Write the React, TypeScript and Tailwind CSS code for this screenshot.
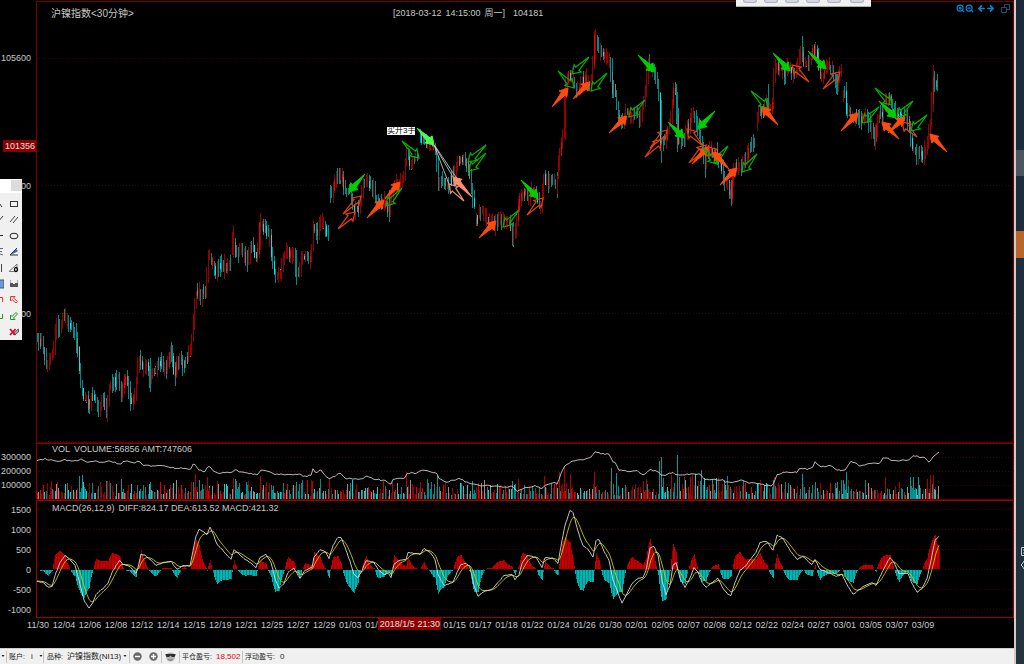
import { useState } from 'react';
import type { ReactNode } from 'react';
import { ArrowLeft, ArrowRight, ZoomIn, ZoomOut } from 'lucide-react';

type Point = [number, number];
type ArrowKind = 'buy' | 'buyOpen' | 'sell' | 'sellOpen' | 'sellHot' | 'buyHot' | 'buyHotOpen';
type Arrow = [ArrowKind, number, number, number, number];

// Each segment is one unbroken run of candles, split where the price gaps.
const priceSegments: Point[][] = [
  [[37, 335], [39, 345], [42, 340], [44, 352], [46, 360], [48, 366], [50, 358], [52, 358], [54, 350], [56, 330], [57, 320], [59, 330], [62, 325], [63, 318], [65, 316], [67, 322], [69, 325], [72, 325], [75, 332], [76, 330], [77, 345], [79, 355], [80, 372], [82, 390], [84, 396], [87, 398], [89, 408], [91, 400], [94, 395], [97, 402], [99, 410], [101, 406], [104, 400], [106, 410], [107, 416], [109, 390], [112, 382], [114, 385], [118, 375], [120, 380], [121, 400], [124, 382], [127, 378], [129, 388], [131, 402], [134, 400], [136, 390], [138, 365], [140, 358], [142, 365], [144, 372], [148, 362], [150, 382], [151, 376], [154, 372], [157, 368], [160, 362], [164, 365], [167, 372], [170, 355], [171, 347], [173, 360], [175, 378], [177, 365], [180, 358], [184, 366], [187, 360], [190, 352], [193, 335], [194, 315], [196, 295], [199, 290], [201, 302], [203, 290], [206, 290], [208, 265], [209, 255], [213, 262], [216, 273], [219, 268], [222, 262], [225, 268], [229, 265], [231, 262]],
  [[232, 250], [233, 232], [235, 255], [238, 250], [241, 247], [244, 252], [246, 258], [248, 262], [251, 245], [253, 245], [256, 258], [259, 248], [260, 220], [262, 227], [265, 228], [268, 235], [270, 235], [272, 258], [275, 273], [278, 276], [281, 272], [284, 260], [286, 252], [288, 250], [290, 255], [294, 252], [296, 270], [298, 276], [300, 270], [302, 258], [305, 258], [308, 254], [310, 265], [313, 240], [314, 222], [316, 230], [318, 235], [320, 222], [323, 222], [326, 230], [328, 234]],
  [[330, 190], [331, 197], [333, 193], [335, 182], [337, 176], [340, 174], [343, 180], [345, 190], [348, 192], [350, 190], [352, 200], [354, 212], [357, 208], [360, 210], [362, 190], [364, 180], [367, 182], [371, 185], [374, 187], [376, 200], [379, 205], [383, 200], [386, 205], [389, 214], [390, 200], [393, 192], [396, 184], [400, 182], [404, 180], [406, 160], [407, 152], [409, 158], [411, 168], [413, 162], [416, 157], [419, 156]],
  [[420, 132], [422, 140], [425, 140], [429, 148], [432, 142], [435, 148], [437, 158], [438, 175], [439, 188], [443, 180], [446, 182], [449, 188], [452, 180], [455, 175], [457, 165], [459, 160], [463, 158], [466, 162], [469, 170], [471, 178], [472, 192], [474, 204]],
  [[476, 222], [479, 215], [482, 210], [485, 215], [488, 222], [492, 222], [496, 225], [500, 220], [503, 222], [505, 218], [508, 222], [511, 225], [513, 242], [515, 230], [518, 213], [520, 200], [523, 195], [526, 192], [529, 200], [532, 190], [535, 190], [538, 200], [540, 206], [541, 210], [543, 190], [545, 176], [548, 182], [551, 182], [554, 180], [557, 187]],
  [[558, 170], [559, 158], [561, 148], [563, 138], [564, 115], [565, 92], [566, 88], [568, 80], [570, 73], [573, 78], [576, 88], [580, 92], [583, 82], [586, 78], [589, 85], [592, 82], [594, 50], [595, 34], [597, 42], [599, 50], [602, 55], [605, 55], [607, 60], [609, 54], [611, 70], [612, 92], [615, 87], [617, 105], [619, 120], [621, 125], [624, 120], [626, 112], [628, 112], [631, 116], [634, 115], [637, 112], [640, 122], [643, 105], [646, 90], [648, 68], [649, 60], [651, 70], [653, 68], [656, 78], [659, 90], [660, 120], [661, 152], [663, 140], [666, 143], [668, 130], [671, 118], [673, 100], [674, 90], [676, 92], [677, 110], [678, 140], [681, 142], [684, 142], [687, 130], [690, 125], [692, 110], [694, 114], [697, 125], [700, 135], [703, 150], [705, 165], [707, 150], [710, 148], [713, 155], [716, 150], [719, 160], [722, 165], [724, 180], [726, 188], [728, 182], [731, 200], [732, 185], [734, 168], [737, 165], [740, 168], [743, 162], [746, 160], [749, 150], [752, 144], [755, 142]],
  [[757, 125], [758, 112], [761, 110], [764, 115], [767, 100], [768, 105], [770, 110], [773, 105], [774, 75], [776, 65], [779, 68], [782, 67], [785, 75], [788, 64], [791, 70], [795, 76], [797, 68], [799, 62], [802, 46], [803, 58], [806, 65], [810, 62], [813, 52], [815, 48], [818, 56], [820, 73], [822, 80], [825, 72], [828, 64], [831, 70], [834, 75], [837, 85], [840, 75], [841, 68]],
  [[843, 95], [846, 93], [847, 115], [849, 107], [852, 118], [855, 118], [857, 112], [860, 120], [863, 118], [866, 114], [869, 125], [873, 128], [875, 140], [878, 120], [881, 114], [883, 115], [885, 102], [888, 100], [891, 100], [894, 110], [897, 118], [900, 115], [903, 120], [905, 115], [907, 117], [910, 130], [912, 145], [915, 150], [918, 158], [921, 152], [924, 158], [927, 146], [930, 130], [932, 110], [933, 75], [935, 85], [938, 82]],
];

// Candles whose shadows stand out from the run: x, high, low, rising
const longCandles: [number, number, number, boolean][] = [
  [107, 395, 422, true], [150, 358, 392, false], [175, 362, 386, false], [171, 342, 362, false], [233, 225, 258, true], [247, 250, 272, false], [260, 213, 250, true],
  [296, 250, 285, false], [389, 190, 222, false], [513, 222, 247, false], [557, 172, 198, false], [595, 29, 60, true], [661, 100, 163, false],
  [705, 150, 178, false], [731, 180, 206, false], [768, 84, 112, false], [802, 36, 62, false], [815, 43, 60, true], [875, 125, 150, true], [924, 140, 165, true],
  [933, 65, 112, true], [565, 78, 140, true], [340, 168, 180, true], [677, 92, 152, false], [612, 58, 98, false], [785, 66, 84, false], [837, 74, 95, false],
];

const openInterest: Point[] = [
  [37, 461], [45, 459], [55, 461], [65, 460], [75, 461], [80, 459], [88, 462], [97, 461], [102, 463], [110, 461], [120, 464], [125, 461], [135, 463], [139, 461], [143, 465], [155, 466], [165, 466], [175, 468], [185, 468], [190, 470], [194, 463], [198, 469], [205, 472], [208, 465], [213, 470], [218, 474], [225, 472], [232, 473], [234, 469], [240, 472], [250, 473], [258, 475], [260, 470], [267, 471], [275, 475], [280, 474], [290, 475], [300, 474], [303, 477], [311, 475], [313, 469], [316, 474], [320, 469], [324, 474], [328, 479], [335, 476], [340, 473], [345, 478], [360, 480], [366, 476], [375, 479], [385, 481], [391, 484], [393, 479], [405, 478], [406, 473], [415, 473], [423, 470], [430, 472], [437, 473], [439, 478], [446, 482], [455, 480], [459, 478], [466, 482], [475, 485], [490, 486], [505, 487], [512, 486], [517, 491], [525, 488], [535, 486], [542, 489], [545, 485], [555, 483], [558, 484], [560, 476], [564, 467], [570, 462], [580, 460], [592, 457], [594, 452], [598, 452], [600, 454], [610, 454], [612, 461], [616, 463], [619, 470], [630, 472], [636, 470], [643, 475], [650, 470], [657, 471], [662, 476], [670, 473], [673, 472], [676, 475], [690, 474], [700, 474], [705, 479], [715, 480], [723, 480], [725, 482], [733, 482], [740, 480], [748, 483], [755, 483], [765, 485], [770, 486], [774, 484], [776, 475], [785, 472], [797, 472], [800, 468], [808, 469], [813, 467], [815, 462], [820, 467], [830, 466], [838, 470], [845, 470], [851, 461], [860, 466], [870, 463], [880, 463], [884, 457], [893, 461], [910, 460], [912, 455], [925, 458], [929, 462], [935, 455], [939, 452],
];

const diffLine: Point[] = [
  [37, 581], [43, 582], [48, 587], [52, 586], [55, 575], [60, 562], [65, 555], [70, 559], [75, 565], [79, 580], [84, 600], [89, 608], [93, 602], [96, 594], [103, 588], [108, 583], [112, 572], [118, 562], [120, 560], [123, 564], [130, 566], [136, 573], [138, 567], [141, 554], [145, 555], [151, 560], [156, 565], [164, 562], [171, 561], [177, 569], [184, 565], [190, 566], [193, 550], [196, 536], [199, 529], [203, 531], [207, 534], [210, 527], [213, 533], [217, 544], [222, 549], [228, 556], [231, 559], [234, 549], [238, 553], [245, 559], [250, 562], [256, 567], [260, 557], [266, 554], [271, 562], [275, 578], [279, 588], [284, 583], [288, 572], [294, 568], [300, 578], [305, 570], [312, 567], [314, 557], [320, 549], [326, 552], [329, 558], [333, 545], [338, 537], [341, 537], [345, 547], [350, 561], [354, 574], [358, 577], [362, 570], [366, 560], [374, 562], [378, 569], [384, 574], [388, 573], [391, 577], [394, 564], [399, 560], [406, 559], [408, 552], [420, 554], [424, 548], [430, 552], [435, 559], [438, 574], [444, 585], [453, 582], [457, 572], [461, 564], [466, 563], [470, 567], [474, 585], [478, 596], [484, 591], [492, 589], [498, 582], [504, 575], [512, 574], [515, 579], [519, 574], [522, 563], [527, 555], [536, 557], [542, 567], [545, 557], [553, 558], [558, 563], [562, 540], [565, 525], [570, 510], [573, 512], [577, 527], [580, 537], [583, 545], [588, 549], [593, 557], [596, 540], [599, 539], [604, 551], [609, 560], [613, 580], [619, 595], [622, 603], [626, 595], [632, 583], [638, 578], [643, 577], [646, 570], [650, 548], [654, 546], [658, 555], [662, 580], [666, 594], [670, 585], [673, 565], [676, 562], [680, 578], [685, 587], [690, 578], [694, 567], [698, 572], [702, 582], [706, 587], [711, 583], [718, 578], [723, 588], [728, 594], [731, 595], [735, 582], [740, 570], [746, 565], [752, 557], [756, 552], [760, 542], [767, 541], [773, 550], [777, 535], [782, 537], [790, 550], [797, 559], [803, 556], [808, 561], [812, 564], [815, 559], [820, 569], [828, 572], [836, 576], [842, 574], [847, 584], [853, 594], [858, 590], [865, 585], [872, 582], [876, 585], [883, 570], [890, 557], [894, 562], [899, 573], [908, 573], [912, 583], [917, 592], [922, 588], [927, 578], [931, 560], [935, 540], [939, 536],
];

const volumeSpikes: Point[] = [
  [51, 18], [57, 17], [79, 23], [82, 24], [107, 18], [121, 20], [150, 17], [170, 14], [195, 25], [199, 19], [207, 22], [233, 21], [235, 20], [246, 17], [260, 23], [273, 13], [296, 17], [312, 18], [329, 20], [392, 17], [406, 27], [420, 17], [437, 24], [472, 18], [512, 18], [518, 20], [544, 23], [559, 27], [564, 33], [570, 25], [594, 27], [611, 31], [616, 26], [643, 18], [646, 20], [659, 38], [661, 42], [671, 24], [677, 44], [684, 22], [690, 22], [701, 29], [712, 19], [724, 19], [774, 22], [802, 25], [815, 17], [837, 17], [843, 19], [846, 27], [885, 22], [899, 17], [910, 22], [913, 22], [918, 22], [927, 20], [930, 24], [933, 24],
];

// kind, tip x, tip y, tail x, tail y
const arrows: Arrow[] = [
  ['buyOpen', 361, 196, 343, 214], ['buyOpen', 355, 212, 338, 229], ['sell', 349, 192, 365, 174],
  ['buy', 384, 200, 367, 218], ['buy', 400, 182, 385, 199], ['sellOpen', 386, 206, 402, 188],
  ['sellOpen', 419, 158, 402, 141], ['sellHot', 434, 145, 417, 128], ['sellOpen', 468, 162, 486, 145],
  ['sellOpen', 469, 171, 486, 153], ['buyHot', 453, 177, 472, 197], ['buyHotOpen', 449, 184, 464, 201],
  ['buy', 496, 221, 479, 238], ['sellOpen', 503, 227, 519, 210], ['sell', 538, 198, 521, 180],
  ['buyOpen', 543, 198, 527, 215], ['buy', 568, 88, 552, 107], ['sellOpen', 574, 88, 558, 71],
  ['sellOpen', 572, 74, 589, 57], ['buy', 590, 82, 573, 99], ['sellOpen', 591, 91, 607, 73],
  ['sell', 655, 72, 638, 55], ['sellOpen', 629, 117, 645, 100], ['buy', 627, 116, 609, 133],
  ['buyOpen', 667, 130, 650, 148], ['buyOpen', 662, 139, 645, 157], ['sell', 684, 138, 668, 122],
  ['buyOpen', 687, 129, 703, 146], ['sell', 698, 129, 715, 111], ['buyOpen', 706, 145, 689, 163],
  ['buy', 708, 147, 692, 164], ['buyOpen', 708, 147, 727, 167], ['sellOpen', 717, 164, 703, 148],
  ['sellOpen', 714, 163, 728, 146], ['buy', 713, 152, 729, 169], ['buy', 737, 168, 720, 185],
  ['sellOpen', 742, 172, 757, 154], ['sellOpen', 768, 108, 751, 91], ['buy', 762, 107, 778, 125],
  ['sell', 790, 71, 773, 53], ['buyOpen', 792, 65, 809, 82], ['sell', 826, 69, 808, 51],
  ['buyOpen', 840, 72, 823, 89], ['buy', 858, 113, 841, 131], ['sellOpen', 862, 123, 879, 107],
  ['sellOpen', 892, 105, 875, 88], ['sell', 896, 118, 879, 101], ['sellOpen', 897, 117, 913, 101],
  ['buy', 882, 122, 899, 139], ['buy', 905, 117, 888, 133], ['buyOpen', 902, 122, 917, 137],
  ['sellOpen', 911, 131, 927, 115], ['buy', 930, 134, 947, 152],
];

const arrowStyle: Record<ArrowKind, { fill: string; stroke: string }> = {
  buy: { fill: '#ff4a10', stroke: '#ff4a10' },
  buyOpen: { fill: 'none', stroke: '#e0430f' },
  sell: { fill: '#00d000', stroke: '#00d000' },
  sellOpen: { fill: 'none', stroke: '#00b400' },
  sellHot: { fill: '#4dff4d', stroke: '#4dff4d' },
  buyHot: { fill: '#ff8e70', stroke: '#ff8e70' },
  buyHotOpen: { fill: 'none', stroke: '#e8957c' },
};

// The cursor tag covers the labels after 01/03, so only the start of one is drawn there.
const datesBeforeCursor = ['11/30', '12/04', '12/06', '12/08', '12/12', '12/14', '12/15', '12/19', '12/21', '12/25', '12/27', '12/29', '01/03'];
const datesAfterCursor = [
  '01/15', '01/17', '01/18', '01/22', '01/24', '01/26', '01/30', '02/01', '02/05', '02/07',
  '02/08', '02/12', '02/22', '02/24', '02/27', '03/01', '03/05', '03/07', '03/09',
];

const makeRandom = (seed: number) => {
  let s = seed;
  return () => {
    s = (s * 1664525 + 1013904223) % 4294967296;
    return s / 4294967296;
  };
};

const valueAt = (points: Point[], x: number) => {
  if (x <= points[0][0]) return points[0][1];
  for (let i = 1; i < points.length; i++) {
    const [x1, y1] = points[i];
    if (x <= x1) {
      const [x0, y0] = points[i - 1];
      return y0 + ((y1 - y0) * (x - x0)) / (x1 - x0);
    }
  }
  return points[points.length - 1][1];
};

const toPath = (points: Point[]) => points.map(([x, y], i) => `${i ? 'L' : 'M'}${x} ${y.toFixed(1)}`).join('');

// Bars are collected into one path per colour.
type Layers = Record<string, string>;
const addBar = (layers: Layers, color: string, x: number, top: number, bottom: number) => {
  layers[color] = `${layers[color] ?? ''}M${x} ${Math.round(top)}V${Math.round(bottom)}`;
};

const buildCandles = () => {
  const rnd = makeRandom(12);
  const layers: Layers = {};
  for (const seg of priceSegments) {
    const last = seg[seg.length - 1][0];
    for (let x = seg[0][0]; x <= last; x += 1.5) {
      const a = valueAt(seg, x - 0.8);
      const b = valueAt(seg, x + 0.8);
      const px = Math.floor(x) + 0.5;
      const top = Math.min(a, b);
      const bottom = Math.max(a, b);
      const up = Math.abs(b - a) > 4 ? b < a : rnd() > 0.5;
      const wick = rnd() < 0.15 ? 10 : 7;
      addBar(layers, up ? '#980000' : '#008b8b', px, top - 2 - rnd() * wick, bottom + 2 + rnd() * wick);
      const pick = rnd();
      if (pick < 0.14) addBar(layers, up ? '#f00000' : '#00e8e8', px, top - 1 - rnd() * 3, bottom + 1 + rnd() * 3);
      else if (pick < 0.34) addBar(layers, '#808080', px, top - 2 - rnd() * 2, bottom + 2 + rnd() * 2);
    }
  }
  longCandles.forEach(([x, high, low, rising]) => addBar(layers, rising ? '#980000' : '#008b8b', x + 0.5, high, low));
  return layers;
};

const buildVolume = () => {
  const rnd = makeRandom(77);
  const layers: Layers = {};
  const colors = ['#980000', '#e00000', '#008b8b', '#00d8d8', '#909090', '#980000', '#008b8b'];
  for (let x = 37; x < 940; x += 1.5) {
    const r = rnd();
    const busy = x > 650 && x < 730 ? 6 : 0;
    addBar(layers, colors[Math.floor(rnd() * colors.length)], Math.floor(x) + 0.5, 499 - 3 - r * r * (13 + busy) - rnd() * 4, 499);
  }
  volumeSpikes.forEach(([x, h]) => {
    const rising = valueAt(priceSegments.flat(), x + 2) < valueAt(priceSegments.flat(), x - 2);
    addBar(layers, rising ? '#b00000' : '#009c9c', x + 0.5, 499 - h, 499);
    addBar(layers, rising ? '#980000' : '#008b8b', x + 2.5, 499 - h * 0.5, 499);
  });
  return layers;
};

const buildMacd = () => {
  const rnd = makeRandom(5);
  const diff: Point[] = [];
  const dea: Point[] = [];
  const layers: Layers = {};
  let avg = 581;
  for (let x = 37; x <= 939; x++) {
    const v = valueAt(diffLine, x);
    avg += (v - avg) * 0.2;
    diff.push([x, v + rnd() * 0.8]);
    dea.push([x, avg]);
    const h = Math.round((avg - v) * 2);
    if (h > 0) addBar(layers, x % 3 ? '#c00000' : '#960000', x + 0.5, 569 - h, 569);
    else if (h < 0) addBar(layers, x % 3 ? '#00b4b4' : '#008484', x + 0.5, 570, 570 - h);
  }
  return { diff, dea, layers };
};

const candles = buildCandles();
const volume = buildVolume();
const macd = buildMacd();
const oiRandom = makeRandom(31);
const oiPoints: Point[] = Array.from({ length: 452 }, (_, i) => [37 + i * 2, valueAt(openInterest, 37 + i * 2) + oiRandom() * 1.4 - 0.7]);

function Bars({ layers }: { layers: Layers }) {
  return (
    <g shapeRendering="crispEdges" fill="none">
      {Object.entries(layers).map(([color, d]) => <path key={color} d={d} stroke={color} />)}
    </g>
  );
}

function Panel({ top, height, grid, children }: { top: number; height: number; grid: number[]; children: ReactNode }) {
  return (
    <svg viewBox={`36 ${top} 978 ${height}`} preserveAspectRatio="none" className="block h-full w-full" aria-hidden="true">
      <g shapeRendering="crispEdges">
        {grid.map((y) => <path key={y} d={`M39 ${y}.5H1012`} stroke="#480000" strokeDasharray="1 2" />)}
      </g>
      {children}
    </svg>
  );
}

function TradeArrow({ arrow: [kind, x, y, tx, ty] }: { arrow: Arrow }) {
  const angle = (Math.atan2(y - ty, x - tx) * 180) / Math.PI;
  const len = Math.hypot(x - tx, y - ty);
  return (
    <path
      d={`M0 0L-8 -5L-7.5 -2.3L${-len} 0L-7.5 2.3L-8 5Z`}
      transform={`translate(${x} ${y}) rotate(${angle})`}
      fill={arrowStyle[kind].fill}
      stroke={arrowStyle[kind].stroke}
      strokeWidth={arrowStyle[kind].fill === 'none' ? 1.2 : 0.9}
    />
  );
}

const tools: { name: string; left: ReactNode; right: ReactNode }[] = [
  { name: 'Rectangle', left: <path d="M-3 4L2 11" stroke="#333" />, right: <rect x="2.5" y="5.5" width="7" height="5" stroke="#333" /> },
  { name: 'Parallel lines', left: <path d="M-2 10L3 4" stroke="#333" />, right: <path d="M2 10L7 4M5 11L10 5" stroke="#444" /> },
  { name: 'Ellipse', left: <path d="M-2 7.5H3" stroke="#222" />, right: <ellipse cx="6" cy="8" rx="4" ry="2.8" stroke="#222" /> },
  { name: 'Fan', left: <path d="M-1 4.5H3M-1 7.5H2M0 10L3 11" stroke="#666" />, right: <><path d="M2 11H10M2 11L9 4" stroke="#333" /><path d="M3 11L10 7L8 5Z" fill="#2a62b8" /></> },
  { name: 'Angle', left: <path d="M1.5 4V12" stroke="#444" />, right: <><path d="M1 11.5L9 4V11.5Z" stroke="#777" /><ellipse cx="8" cy="9.500" rx="1.500" ry="2" stroke="#111" strokeWidth="1.3" /></> },
  { name: 'Levels', left: <path d="M-1 4H4V12H-1Z" fill="#6f97d6" stroke="#456" />, right: <><path d="M2.5 4V10.500H9.500V4" stroke="#aaa" /><path d="M2 11V7H5V8H7V7H10V11Z" fill="#555" /></> },
  { name: 'Up mark', left: <path d="M-2 5.5H2.5V10" stroke="#f03030" />, right: <path d="M2.5 4.5H7L5.5 6L9.5 9.5L8 11L4 7.5L2.5 9Z" stroke="#f03030" /> },
  { name: 'Down mark', left: <path d="M-2 10.5H2.5V6" stroke="#1d9a1d" />, right: <path d="M2.5 11.5H7L5.5 10L9.5 6L8 4.5L4 8.5L2.5 7Z" stroke="#1d9a1d" /> },
  { name: 'Delete', left: null, right: <><path d="M6 11L10.500 8V5L5 9Z" fill="#aaa" stroke="#666" /><path d="M2 5L7.500 11M7.500 5L2 11" stroke="#e8002c" strokeWidth="1.8" /></> },
];

function DrawingPalette() {
  return (
    <div className="absolute left-0 top-[179px] w-[22px] bg-[#f0f0f0]">
      <div className="flex h-[14px] justify-end bg-white">
        <button type="button" aria-label="Close palette" className="mt-px h-[11px] w-[11px] bg-[#dcdcdc]" />
      </div>
      <div className="h-[3px]" />
      {tools.map((tool) => (
        <button key={tool.name} type="button" aria-label={tool.name} className="flex h-4 w-full justify-between">
          <svg width="4" height="16" viewBox="0 0 4 16" fill="none">{tool.left}</svg>
          <svg width="14" height="16" viewBox="0 0 14 16" fill="none">{tool.right}</svg>
        </button>
      ))}
    </div>
  );
}

function Separator() {
  return <span className="h-3 w-px shrink-0 bg-[#c4c4c4]" />;
}

function Caret() {
  return <svg width="4" height="3" viewBox="0 0 4 3" className="shrink-0"><path d="M0.500 0H3.500L2 2Z" fill="#222" /></svg>;
}

function StatusBar() {
  const [account, setAccount] = useState('i');
  const [product, setProduct] = useState('NI13');
  return (
    <footer className="flex h-4 shrink-0 items-center overflow-hidden whitespace-nowrap border-t border-[#cfcfcf] bg-[#f0f0f0] text-[7px] leading-3 text-[#222]">
      <span className="flex w-[9px] items-center gap-px pl-px"><Caret /><Separator /></span>
      <label htmlFor="account" className="w-[22px]">账户:</label>
      <select id="account" value={account} onChange={(e) => setAccount(e.target.value)} className="w-2 appearance-none text-[8px] outline-none">
        <option value="i">i</option>
      </select>
      <Caret />
      <Separator />
      <label htmlFor="product" className="ml-[3px] w-5">品种:</label>
      <select id="product" value={product} onChange={(e) => setProduct(e.target.value)} className="w-14 appearance-none text-[8px] outline-none">
        <option value="NI13">沪镍指数(NI13)</option>
      </select>
      <Caret />
      <span className="flex items-center gap-[3px] pl-[2px]">
        <Separator />
        <button type="button" aria-label="Zoom out">
          <svg width="9" height="9" viewBox="0 0 9 9"><circle cx="4.5" cy="4.5" r="4.2" fill="#6a6a6a" /><path d="M2 4.5H7" stroke="#fff" strokeWidth="1.4" /></svg>
        </button>
        <span className="w-px" />
        <button type="button" aria-label="Zoom in">
          <svg width="9" height="9" viewBox="0 0 9 9"><circle cx="4.5" cy="4.5" r="4.2" fill="#6a6a6a" /><path d="M2 4.5H7M4.5 2V7" stroke="#fff" strokeWidth="1.4" /></svg>
        </button>
        <Separator />
        <button type="button" aria-label="Privacy">
          <svg width="11" height="10" viewBox="0 0 11 10">
            <circle cx="5.5" cy="5" r="4.5" fill="#b5b5b5" />
            <path d="M0.500 2H10.500V3L9.500 5H7L5.5 3.5L4 5H1.500L0.500 3Z" fill="#2c2c2c" />
            <path d="M3.5 7.5Q5.5 9 7.5 7.5" stroke="#666" fill="none" />
          </svg>
        </button>
        <Separator />
      </span>
      <span className="w-[36px] pl-[2px]">平仓盈亏:</span>
      <span className="w-[26px] text-[8px] text-red-600">18,502</span>
      <Separator />
      <span className="w-[37px] pl-[2px]">浮动盈亏:</span>
      <span className="text-[8px]">0</span>
    </footer>
  );
}

function SideStrip() {
  return (
    <aside className="relative w-2 shrink-0 bg-gradient-to-b from-[#1a2a3c] to-[#22343c]">
      <div className="absolute inset-x-0 top-[150px] h-[26px] bg-[#4b5660]" />
      <div className="absolute inset-x-0 top-[231px] h-[27px] bg-[#b9662a]" />
      <svg className="absolute right-0 top-[544px]" width="4" height="28" viewBox="0 0 4 28" fill="none" stroke="#c8ced2">
        <path d="M5 3.500H1.500V11.500H5M3 6H5M3 9H5" />
        <path d="M5 17Q3 17 3 19L1 21L3 23Q3 25 5 25" />
      </svg>
    </aside>
  );
}

export default function App() {
  return (
    <div className="flex h-screen w-full overflow-hidden bg-black font-['Liberation_Sans','Noto_Sans_CJK_SC',sans-serif] text-[9px] text-[#c8c8c8]">
      <main className="relative flex min-w-0 flex-1 flex-col">
        <section className="flex min-h-0 flex-1">
          <div className="grid w-9 shrink-0 grid-rows-[58fr_128fr_128fr_129fr] pr-[5px] text-right leading-3">
            {['105600', '99200', '93200'].map((label) => (
              <div key={label} className="flex items-end justify-end">
                <span className="translate-y-1/2">{label}</span>
              </div>
            ))}
          </div>
          <div className="relative min-w-0 flex-1">
            <Panel top={0} height={443} grid={[58, 185, 313, 441]}>
              <path d="M36.500 443V1.500H1013.500V443" stroke="#7a0000" fill="none" shapeRendering="crispEdges" />
              <path d="M36 442.500H1014" stroke="#500000" shapeRendering="crispEdges" />
              <Bars layers={candles} />
              <g stroke="#d8d8d8" strokeWidth="0.8" fill="none">
                <path d="M434 145L449 184M434 145L453 177M435 146L460 183" />
              </g>
              {arrows.map((arrow) => <TradeArrow key={arrow.join()} arrow={arrow} />)}
            </Panel>
            <h1 className="absolute left-[15px] top-2 text-[10px] leading-3">沪镍指数&lt;30分钟&gt;</h1>
            <p className="absolute left-[357px] top-[7px] flex gap-1 whitespace-nowrap leading-3">
              <span>[2018-03-12</span>
              <span>14:15:00</span>
              <span>周一]</span>
              <span className="pl-1">104181</span>
            </p>
            <span className="absolute left-[351px] top-[127px] whitespace-nowrap bg-white text-[8px] leading-[8px] text-black">买开3手</span>
            <nav className="absolute right-1 top-1 flex items-center text-[#0b86d6]">
              <button type="button" aria-label="Zoom in chart"><ZoomIn size={9} strokeWidth={3} /></button>
              <button type="button" aria-label="Zoom out chart"><ZoomOut size={9} strokeWidth={3} /></button>
              <button type="button" aria-label="Scroll left" className="pl-[3px]"><ArrowLeft size={9} strokeWidth={4} /></button>
              <button type="button" aria-label="Scroll right"><ArrowRight size={9} strokeWidth={4} /></button>
              <button type="button" aria-label="Restore window" className="pl-[6px]">
                <svg width="9" height="9" viewBox="0 0 9 9" fill="none" stroke="#24506e"><path d="M3.500 3V0.500H8.500V5.500H6M0.500 3.500H5.500V8.500H0.500Z" /></svg>
              </button>
            </nav>
          </div>
        </section>

        <section className="flex h-[57px] shrink-0">
          <div className="w-9 shrink-0 pr-[5px] pt-[7px] text-right leading-[14px]">
            {['300000', '200000', '100000'].map((label) => <div key={label}>{label}</div>)}
          </div>
          <div className="relative min-w-0 flex-1">
            <Panel top={443} height={57} grid={[457, 471, 485]}>
              <path d="M36.500 500V443.500H1013.500V500" stroke="#860000" fill="none" shapeRendering="crispEdges" />
              <Bars layers={volume} />
              <path d="M36 499.500H1014" stroke="#600000" shapeRendering="crispEdges" />
              <path d={toPath(oiPoints)} stroke="#c8c8c8" strokeWidth="0.9" fill="none" />
            </Panel>
            <p className="absolute left-4 top-0 flex gap-1 whitespace-nowrap leading-3">
              <span>VOL</span>
              <span>VOLUME:56856 AMT:747606</span>
            </p>
          </div>
        </section>

        <section className="flex h-[118px] shrink-0">
          <div className="w-9 shrink-0 pr-[5px] text-right leading-5">
            {['1500', '1000', '500', '0', '-500', '-1000'].map((label) => <div key={label}>{label}</div>)}
          </div>
          <div className="relative min-w-0 flex-1">
            <Panel top={500} height={118} grid={[509, 529, 549, 569, 589, 609]}>
              <path d="M36.500 500.500H1013.500V617.500H36.500Z" stroke="#a00000" fill="none" shapeRendering="crispEdges" />
              <Bars layers={macd.layers} />
              <path d={toPath(macd.dea)} stroke="#c8c800" strokeWidth="0.9" fill="none" />
              <path d={toPath(macd.diff)} stroke="#d8d8d8" strokeWidth="0.9" fill="none" />
            </Panel>
            <p className="absolute left-4 top-[2px] flex gap-1 whitespace-nowrap leading-3">
              <span>MACD(26,12,9)</span>
              <span>DIFF:824.17 DEA:613.52 MACD:421.32</span>
            </p>
          </div>
        </section>

        <section className="h-[30px] shrink-0 pl-[25px]">
          <div className="grid grid-cols-[repeat(38,minmax(0,1fr))] text-center leading-[14px]">
            {datesBeforeCursor.map((date) => <span key={date}>{date}</span>)}
            <div className="col-span-3 flex justify-between pl-[2px]">
              <span>01/</span>
              <span className="h-3 w-[64px] whitespace-nowrap bg-[#8e0000] pl-[2px] text-left leading-3 text-[#e0e0e0]">2018/1/5 21:30</span>
            </div>
            {datesAfterCursor.map((date) => <span key={date}>{date}</span>)}
          </div>
        </section>

        <StatusBar />

        <span className="absolute left-[3px] top-[140px] w-[33px] bg-[#8e0000] pl-[2px] leading-3 text-[#e0e0e0]">101356</span>
        <DrawingPalette />
        <div className="absolute left-[736px] top-0 flex h-[7px] gap-[7px] border-b border-[#b0b0b0] bg-[#f0f0f0] px-[7px]">
          {['Cursor', 'Line', 'Period', 'Indicator', 'Layout', 'More'].map((name) => (
            <button key={name} type="button" aria-label={name} className="h-[3px] w-[14px] rounded-b-sm border border-t-0 border-[#aab0bc] bg-[#d4d8e2] last:ml-[2px]" />
          ))}
        </div>
      </main>
      <div className="w-[2px] shrink-0 bg-[#d8c8c8]" />
      <SideStrip />
    </div>
  );
}
